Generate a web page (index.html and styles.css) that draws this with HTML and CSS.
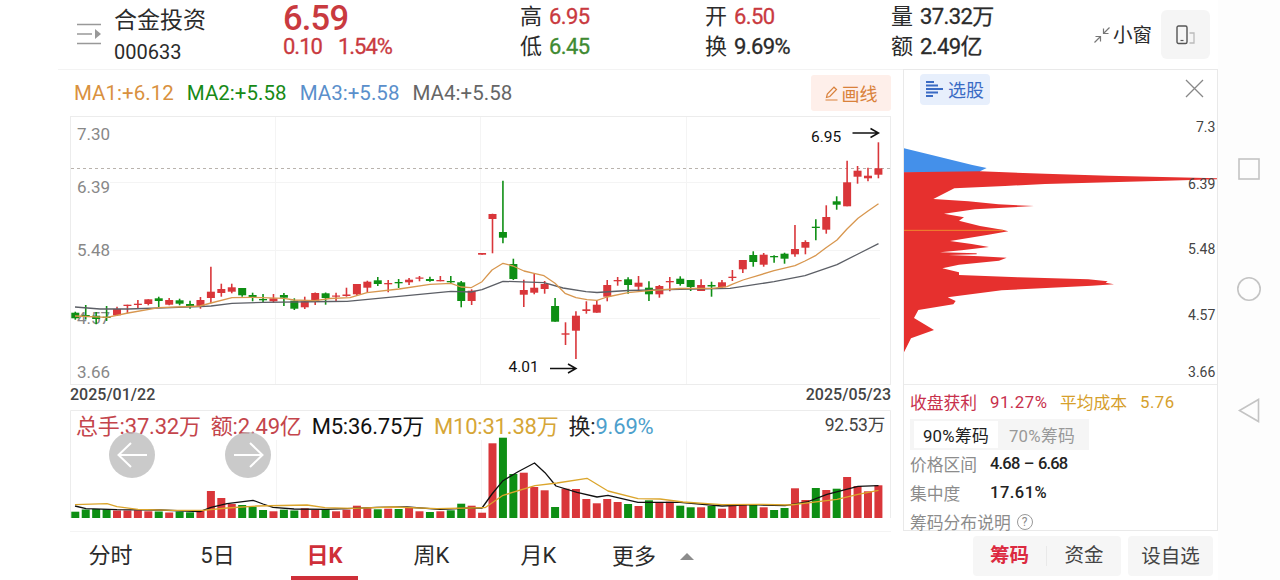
FILE: index.html
```
<!DOCTYPE html>
<html lang="zh-CN">
<head>
    <meta charset="UTF-8">
    <meta name="viewport" content="width=device-width, initial-scale=1.0">
    <title>合金投资 000633</title>
    <link rel="stylesheet" href="styles.css">
</head>
<body>
    <div class="app">
        <header class="quote-bar">
            <div class="stock">
                <svg class="menu-icon" width="26" height="22" viewBox="0 0 26 22">
                    <path d="M1 1.5h24M1 11h15M1 20.500h24" fill="none" stroke="#999" stroke-width="1.5"/>
                    <path d="M19 6l6 5-6 5z" fill="#999"/>
                </svg>
                <div>
                    <h1 class="stock-name">合金投资</h1>
                    <div class="stock-code">000633</div>
                </div>
            </div>
            <div class="price up">
                <div class="price-now">6.59</div>
                <div class="price-change"><span>0.10</span><span>1.54%</span></div>
            </div>
            <dl class="pair">
                <dt>高</dt><dd class="up">6.95</dd>
                <dt>低</dt><dd class="down">6.45</dd>
            </dl>
            <dl class="pair">
                <dt>开</dt><dd class="up">6.50</dd>
                <dt>换</dt><dd>9.69%</dd>
            </dl>
            <dl class="pair">
                <dt>量</dt><dd>37.32万</dd>
                <dt>额</dt><dd>2.49亿</dd>
            </dl>
            <div class="window-tools">
                <svg width="16" height="16" viewBox="0 0 16 16" fill="none" stroke="#777" stroke-width="1.2">
                    <path d="M15.500 .5L9.500 6.500M9.500 1.500v5h5M.5 15.500l6-6M1.500 9.500h5v5"/>
                </svg>
                <span>小窗</span>
                <button class="rotate-btn">
                    <svg width="20" height="20" viewBox="0 0 20 20" fill="none">
                        <rect x="1" y="1" width="10" height="17.500" rx="1.500" stroke="#555" stroke-width="1.400"/>
                        <path d="M4.500 15.500h3" stroke="#555" stroke-width="1.200"/>
                        <path d="M13.500 8h4.500v10h-4.500" stroke="#bbb" stroke-width="1.300"/>
                    </svg>
                </button>
            </div>
        </header>

        <main class="content">
            <section class="charts">
                <div class="ma-row">
                    <span class="ma1">MA1:+6.12</span>
                    <span class="ma2">MA2:+5.58</span>
                    <span class="ma3">MA3:+5.58</span>
                    <span class="ma4">MA4:+5.58</span>
                    <button class="draw-btn">
                        <svg width="13" height="15" viewBox="0 0 13 15" fill="none" stroke="#d9813b" stroke-width="1.200">
                            <path d="M.5 14h12M1.500 11.500l.8-3.500L9 1.200l2.500 2.300-6.700 7z"/>
                        </svg>
                        画线
                    </button>
                </div>
                <svg class="kline" width="821" height="269" viewBox="70 116 821 269">
                    <rect class="frame" x="70.500" y="116.500" width="820" height="268"/>
                    <path class="grid" d="M275.500 117v267M480.500 117v267M686.500 117v267M110 182.500h770M110 250.500h770M110 318.500h770"/>
                    <path class="last-price" d="M71 168.500h819"/>
                    <g class="axis">
                        <text x="77" y="139.500">7.30</text>
                        <text x="77" y="192.500">6.39</text>
                        <text x="77" y="256">5.48</text>
                        <text x="77" y="323.500">4.57</text>
                        <text x="77" y="378">3.66</text>
                    </g>
                    <g id="candles"></g>
                    <polyline class="line-slow" points="75,307 100,309 128,309 200,306.700 211,306 232,303.300 263,302.300 330,301.500 347,301.300 399,296.300 451,291.300 471,292 482,289.700 503,281.300 544,282.700 563,288 586,291.700 597,292.500 628,290.500 680,289.300 730,288.300 774,281.700 805,275.700 837,264.700 858,254 878.500,243.700"/>
                    <polyline class="line-fast" points="75,316 107,317.300 128,313 159,307.700 190,306.500 200,306 211,303 232,297.700 252,297.300 284,298.300 294,300 315,300.700 330,298.500 350,297.700 367,292.700 399,289 430,284.300 451,283.300 461,287 471,287.700 482,281.700 492,270 503,263.300 513,266 524,271 534,273.300 544,275.700 555,283.300 565,293.300 576,297.700 587,299.700 597,300.300 607,297 628,292.700 649,290.700 680,288.500 712,288.300 727,286.700 732,284.300 743,280 774,270.700 795,265.700 805,261 816,255.300 826,247.700 837,240 847,229 858,218.300 868,211 878.500,203.700"/>
                    <g class="mark">
                        <text x="811" y="142">6.95</text>
                        <path d="M852.500 133h26M870.500 128.500l8 4.500-8 4.500"/>
                        <text x="508.500" y="372">4.01</text>
                        <path d="M550 368.500h26M568 364l8 4.500-8 4.500"/>
                    </g>
                </svg>
                <div class="dates"><span>2025/01/22</span><span>2025/05/23</span></div>
                <div class="volume">
                    <svg width="821" height="122" viewBox="70 410 821 122">
                        <path class="frame" d="M70.500 518v-107.500h820V518"/>
                        <path class="grid" d="M276.500 440v78M481.500 440v78M686.500 440v78M58 531.500h840"/>
                        <g id="volumes"></g>
                        <polyline class="line-m5" points="75,506 86,508.700 117,509.700 160,510 200,511.700 211,507.300 227,503.700 253,500.300 263,504 273,507.300 294,509 325,509.300 347,508.700 377,507.300 407,507 440,509.300 470,508 482,508 492,494 503,480.700 518,471.700 534.500,463 545,472.700 556,486 577,492.300 597,497 608,495.300 638,502.300 680,502.300 722,506 753,504.700 785,505.700 807,502 827,494.300 858,486.300 878.500,485.700"/>
                        <polyline class="line-m10" points="75,504.700 107,503.700 117,506.700 138,509.300 173,510.300 203,510.300 227,508 257,506 307,505 325,507.700 353,508.300 393,507 437,508.700 470,508 485,507.700 503,495.300 535,485.700 557,483 587,478.300 608,491 638,498.700 660,499 683,502 722,504.700 760,504.300 790,505 837,499.300 858,494.300 878.500,490.300"/>
                    </svg>
                    <div class="vol-legend">
                        <span class="up">总手:37.32万</span>
                        <span class="up">额:2.49亿</span>
                        <span class="m5">M5:36.75万</span>
                        <span class="m10">M10:31.38万</span>
                        <span>换:<b>9.69%</b></span>
                        <span class="vol-max">92.53万</span>
                    </div>
                    <button class="pan pan-left">
                        <svg width="46" height="46" viewBox="0 0 46 46"><path d="M38 23H9.500M22 11L9.500 23 22 35"/></svg>
                    </button>
                    <button class="pan pan-right">
                        <svg width="46" height="46" viewBox="0 0 46 46"><path d="M9 23h28.500M25 11l12.500 12L25 35"/></svg>
                    </button>
                </div>
            </section>

            <aside class="chips">
                <div class="chips-head">
                    <button class="pick-btn">
                        <svg width="17" height="16" viewBox="0 0 17 16" stroke="#3a6bc4" stroke-width="2">
                            <path d="M0 1h8M0 4.500h12M0 8h17M0 11.500h12M0 15h7"/>
                        </svg>
                        选股
                    </button>
                    <svg class="close" width="19" height="19" viewBox="0 0 19 19" stroke="#888" stroke-width="1.300">
                        <path d="M1 1l17 17M18 1L1 18"/>
                    </svg>
                </div>
                <svg class="profile" width="313" height="274" viewBox="27 0 939 822">
                    <path fill="#4490ea" d="M27 115L110 135 232 165 275 174 255 184V188H27z"/>
                    <path fill="#e6302e" d="M27 187L255 184 450 191 640 197 967 205 967 208 810 212 450 222 330 228 178 235 115 267 220 274 310 283 417 288 240 298 147 311 207 322 192 332 255 348 322 359 340 364 280 374 165 393 230 402 282 411 200 421 135 427 245 430 245 433 160 435 255 439 335 443 312 452 192 464 142 475 192 487 192 495 370 502 580 508 638 514 632 518 657 523 590 527 320 541 158 562 182 573 175 583 70 600 57 624 117 660 48 685 27 727z"/>
                    <path stroke="#f08a2e" stroke-width="3" d="M27 361H325"/>
                    <g class="chip-axis">
                        <text x="961" y="65">7.3</text>
                        <text x="961" y="237">6.39</text>
                        <text x="961" y="433">5.48</text>
                        <text x="961" y="629">4.57</text>
                        <text x="961" y="801">3.66</text>
                    </g>
                </svg>
                <div class="chips-info">
                    <div class="info-row profit">
                        <span>收盘获利</span><span class="num">91.27%</span>
                        <span class="cost">平均成本</span><span class="cost num">5.76</span>
                    </div>
                    <div class="segment">
                        <button class="active">90%筹码</button>
                        <button>70%筹码</button>
                    </div>
                    <div class="info-row"><span>价格区间</span><strong class="range">4.68 – 6.68</strong></div>
                    <div class="info-row"><span>集中度</span><strong>17.61%</strong></div>
                    <div class="info-row help"><span>筹码分布说明</span><i>?</i></div>
                </div>
            </aside>
        </main>

        <footer class="bottom-bar">
            <nav class="tabs">
                <a>分时</a>
                <a>5日</a>
                <a class="active">日K</a>
                <a>周K</a>
                <a>月K</a>
                <a class="more">更多 <i></i></a>
            </nav>
            <div class="actions">
                <div class="switch">
                    <button class="active">筹码</button>
                    <button>资金</button>
                </div>
                <button class="add-btn">设自选</button>
            </div>
        </footer>
    </div>

    <div class="system-nav">
        <svg width="24" height="266" viewBox="0 0 24 266" fill="none" stroke="#c4c4c4" stroke-width="1.600">
            <rect x="2" y="2" width="20" height="20"/>
            <circle cx="12" cy="132" r="11.200"/>
            <path d="M21.500 242.500v22L2.500 253.500z"/>
        </svg>
    </div>

    <script src="chart.js"></script>
</body>
</html>
```
FILE: styles.css
```
* {
    margin: 0;
    padding: 0;
    box-sizing: border-box;
}
body {
    display: flex;
    width: 1280px;
    height: 580px;
    overflow: hidden;
    background: #fff;
    color: #2b2b2b;
    font-family: Roboto, "Noto Sans CJK SC", sans-serif;
}
button {
    border: none;
    background: none;
    color: inherit;
    font: inherit;
}
svg {
    display: block;
    flex-shrink: 0;
}
.up {
    color: #c93a3f;
}
.down {
    color: #3f8a32;
}
.app {
    display: flex;
    flex-direction: column;
    width: 1218px;
    padding-left: 58px;
}

/* header */
.quote-bar {
    display: grid;
    grid-template-columns: 225px 237px 185px 186px 203px 1fr;
    height: 70px;
    border-bottom: 1px solid #f3f3f3;
}
.stock {
    display: flex;
    padding: 6px 0 0 18px;
}
.menu-icon {
    margin: 17px 12px 0 0;
}
.stock-name {
    font-size: 23px;
    font-weight: 400;
    line-height: 30px;
}
.stock-code {
    font-size: 20px;
    line-height: 32px;
}
.price-now {
    font-size: 34.500px;
    font-weight: 500;
    line-height: 36px;
    letter-spacing: -.8px;
}
.price-change {
    display: flex;
    gap: 16px;
    font-size: 22px;
    line-height: 22px;
    letter-spacing: -1px;
    -webkit-text-stroke: .3px;
}
.pair {
    display: grid;
    grid-template-columns: 29px 1fr;
    align-content: start;
    font-size: 22px;
    line-height: 30px;
    padding-top: 2px;
}
.pair dd {
    letter-spacing: -.6px;
    -webkit-text-stroke: .3px;
    white-space: nowrap;
}
.window-tools {
    display: flex;
    align-items: center;
    font-size: 19.500px;
}
.window-tools span {
    margin: -2px 9px 0 3px;
}
.rotate-btn {
    display: flex;
    align-items: center;
    justify-content: center;
    width: 49px;
    height: 49px;
    border-radius: 6px;
    background: #f5f5f5;
}

/* charts */
.content {
    display: flex;
    height: 462px;
}
.charts {
    width: 845px;
    padding-left: 12px;
}
.ma-row {
    display: flex;
    align-items: center;
    gap: 13px;
    height: 46px;
    padding: 0 12px 0 4px;
    font-size: 20.500px;
    letter-spacing: .03px;
}
.ma1 { color: #d9913f; }
.ma2 { color: #178a17; }
.ma3 { color: #5a8fcb; }
.ma4 { color: #666; }
.draw-btn {
    display: flex;
    align-items: center;
    justify-content: center;
    gap: 4px;
    width: 80px;
    height: 36px;
    margin-left: auto;
    border-radius: 3px;
    background: #feefea;
    color: #d9813b;
    font-size: 18px;
    letter-spacing: 0;
}
.frame {
    fill: none;
    stroke: #ececec;
}
.grid {
    stroke: #f4f4f4;
}
.last-price {
    stroke: #b9b3ad;
    stroke-dasharray: 3 3;
}
.axis {
    fill: #888;
    font-size: 17px;
}
.line-slow,
.line-fast,
.line-m5,
.line-m10 {
    fill: none;
    stroke-width: 1.300;
    stroke-linejoin: round;
}
.line-slow { stroke: #5c5f66; }
.line-fast { stroke: #d8974f; }
.line-m5 { stroke: #111; }
.line-m10 { stroke: #dba52c; }
.mark {
    fill: #111;
    font-size: 15.500px;
}
.mark path {
    fill: none;
    stroke: #111;
    stroke-width: 1.500;
}
.rise {
    fill: #d9363a;
    stroke: #d9363a;
}
.fall {
    fill: #0e8f14;
    stroke: #0e8f14;
}
.wick {
    stroke-width: 1.600;
}
.body {
    stroke: none;
}
.dates {
    display: flex;
    justify-content: space-between;
    width: 821px;
    height: 25px;
    color: #444;
    font-size: 16px;
    font-weight: 500;
    line-height: 20px;
}
.volume {
    position: relative;
    width: 821px;
}
.vol-legend {
    position: absolute;
    top: 3px;
    left: 6px;
    right: 6px;
    display: flex;
    gap: 10px;
    color: #222;
    font-size: 22px;
    line-height: 28px;
    letter-spacing: -.2px;
    white-space: nowrap;
}
.vol-legend .up { color: #c4454c; }
.vol-legend .m5 { color: #111; }
.vol-legend .m10 { color: #d6a637; }
.vol-legend b {
    color: #4d9fcc;
    font-weight: 400;
}
.vol-legend .vol-max {
    margin-left: auto;
    color: #444;
    font-size: 17.500px;
    line-height: 24px;
}
.pan {
    position: absolute;
    top: 22px;
    border-radius: 50%;
    background: rgba(190, 190, 190, .82);
}
.pan-left { left: 39px; }
.pan-right { left: 155px; }
.pan path {
    fill: none;
    stroke: #fff;
    stroke-width: 2;
}

/* chip distribution */
.chips {
    width: 315px;
    height: 462px;
    margin-top: -1px;
    border: 1px solid #e9e9e9;
}
.chips-head {
    display: flex;
    align-items: flex-start;
    justify-content: space-between;
    height: 40px;
    padding: 4px 13px 0 16px;
}
.pick-btn {
    display: flex;
    align-items: center;
    gap: 5px;
    height: 31px;
    padding: 0 6px 1px;
    border-radius: 4px;
    background: #e7effc;
    color: #3a6bc4;
    font-size: 18px;
}
.close {
    margin-top: 5px;
}
.chip-axis {
    fill: #444;
    font-size: 42px;
    text-anchor: end;
}
.chips-info {
    height: 147px;
    padding: 3px 6px 0;
    border-top: 1px solid #ececec;
    color: #8c8c8c;
    font-size: 16.800px;
}
.info-row {
    display: flex;
    align-items: center;
    height: 29px;
    white-space: nowrap;
}
.info-row span {
    flex: none;
}
.info-row span:first-child {
    width: 80px;
}
.info-row strong {
    color: #222;
    font-size: 16.500px;
    font-weight: 500;
    letter-spacing: .5px;
}
.info-row .range {
    letter-spacing: -.8px;
    word-spacing: 1px;
}
.profit {
    height: 28px;
    color: #c8304c;
}
.profit .num {
    width: 70px;
    letter-spacing: .5px;
}
.profit .cost {
    width: 80px;
    color: #d6a02c;
}
.segment {
    display: flex;
    align-items: center;
    width: 179px;
    height: 31px;
    margin: 3px 0 -1px;
    padding: 0 7px 0 4px;
    background: #f5f5f5;
}
.segment button {
    flex: none;
    width: 84px;
    height: 27px;
    color: #999;
    font-size: 16.800px;
    letter-spacing: .3px;
    white-space: nowrap;
}
.segment button + button {
    width: 88px;
}
.segment .active {
    background: #fff;
    color: #222;
}
.help {
    gap: 6px;
}
.info-row.help span:first-child {
    width: auto;
}
.help i {
    width: 16px;
    height: 16px;
    border: 1px solid #999;
    border-radius: 50%;
    font-size: 12px;
    font-style: normal;
    line-height: 14px;
    text-align: center;
}

/* bottom bar */
.bottom-bar {
    display: flex;
    justify-content: space-between;
    height: 48px;
}
.tabs {
    display: flex;
    margin-left: -1px;
}
.tabs a {
    position: relative;
    width: 107px;
    font-size: 22px;
    line-height: 47px;
    text-align: center;
}
.tabs .active {
    color: #cf2f39;
    font-weight: 700;
}
.tabs .active::after {
    content: "";
    position: absolute;
    left: 20px;
    bottom: 0;
    width: 67px;
    height: 4px;
    background: #cf2f39;
}
.tabs .more {
    display: flex;
    align-items: center;
    gap: 24px;
    padding-left: 20px;
}
.more i {
    border: 7px solid transparent;
    border-top: none;
    border-bottom: 7px solid #8c8c8c;
}
.actions {
    display: flex;
    gap: 7px;
    padding: 4px 5px 4px 0;
    font-size: 19.500px;
}
.switch {
    display: flex;
    align-items: center;
    width: 148px;
    border-radius: 4px;
    background: #f6f6f6;
    color: #444;
}
.switch button {
    width: 76px;
    height: 20px;
    line-height: 20px;
}
.switch .active {
    border-right: 1px solid #e9e9e9;
    color: #dc2a40;
    font-weight: 700;
}
.add-btn {
    width: 85px;
    padding-bottom: 3px;
    border-radius: 4px;
    background: #f6f6f6;
    color: #444;
}

.system-nav {
    width: 62px;
    padding: 157px 0 0 19px;
    background: #fdfdfd;
}
```
FILE: chart.js
```
// color, high, body top, body bottom, low, volume height
const days = [
    ["g", 311.7, 312.7, 318.3, 319.7, 6.3], ["g", 305, 315, 316.5, 319.5, 8.5],
    ["g", 312, 315.7, 319, 324.3, 9], ["g", 306, 316.7, 318, 321, 8.7],
    ["r", 306.7, 309, 315.3, 316, 7.5], ["r", 304.7, 304.7, 306, 313.3, 7.5],
    ["r", 300, 303.7, 305, 308.7, 7.7], ["r", 299.3, 299.3, 304, 305.3, 6.7],
    ["g", 296.7, 298.3, 301, 307.3, 6.5], ["r", 298, 300, 304.7, 305.3, 5.5],
    ["g", 298.7, 300.3, 303.7, 305.3, 6.5], ["g", 300.7, 304, 306, 308.7, 5.7],
    ["r", 297, 300, 306.7, 308.7, 7], ["r", 266.7, 291.7, 298, 303.3, 27],
    ["r", 283.7, 289, 293, 296.7, 20], ["r", 283.7, 287.3, 291.7, 293.3, 14],
    ["g", 288, 288, 295.3, 296.7, 13], ["g", 292.7, 295, 297, 301.3, 11.3],
    ["g", 294, 299, 300.3, 302.7, 8], ["r", 294, 298.3, 301.3, 302.7, 6.7],
    ["g", 293, 295, 297.7, 306, 8.3], ["g", 298.3, 300.7, 308.7, 310, 7.5],
    ["r", 296.7, 301.3, 307.3, 309, 9.7], ["r", 292.5, 293, 300.7, 305, 8],
    ["g", 292.5, 293.3, 298, 304.7, 9], ["r", 292.7, 295.5, 296.7, 301.7, 6.7],
    ["r", 287.7, 294.5, 296, 296.7, 8.3], ["r", 284, 284, 294.3, 296, 12.3],
    ["r", 280.7, 281.7, 287.7, 292, 9.7], ["g", 277, 280.3, 284, 286, 8.7],
    ["r", 280, 283, 284.3, 292.3, 9.3], ["g", 279, 282, 283.3, 288, 9],
    ["r", 278, 279.7, 282.3, 285, 10.7], ["r", 276, 277.5, 278.7, 281.3, 6.7],
    ["g", 276.7, 279, 281, 281.7, 6], ["r", 276, 280, 281.3, 281.3, 6.7],
    ["g", 276, 281, 282.3, 283.3, 7.7], ["g", 281, 282.3, 301, 307.3, 14.3],
    ["r", 289.3, 290.7, 301, 305, 12.3], ["r", 253, 253, 254.7, 254.7, 5.3],
    ["r", 213.7, 214, 219, 253.3, 74.7], ["g", 180.7, 232, 237.7, 243.3, 80.3],
    ["g", 258.7, 264, 279, 280, 44], ["r", 279.7, 290, 294.7, 307, 45.3],
    ["r", 274, 287.7, 292.7, 294.3, 31], ["r", 281, 284, 289, 293.7, 27.7],
    ["g", 298, 306, 321.7, 321.7, 11], ["r", 322.3, 333.3, 334.7, 345, 29.3],
    ["r", 311.3, 315.7, 330.7, 359, 29], ["r", 301.3, 309.3, 311, 313.7, 19],
    ["r", 300.3, 304.7, 312.7, 312.7, 14.7], ["r", 280, 285, 296.7, 301.3, 19],
    ["r", 277, 280, 281.3, 285.7, 16], ["g", 277.3, 279.3, 285, 293.7, 14],
    ["r", 276, 282.7, 286.7, 290.3, 12], ["g", 281.3, 287.7, 294.3, 301, 17.7],
    ["r", 285, 286, 294.3, 297.7, 15.3], ["r", 277, 281, 282.3, 291.3, 16.3],
    ["g", 276.3, 278.7, 284, 285.7, 12.3], ["g", 280, 280, 287, 291, 10.7],
    ["r", 279.3, 285, 291, 291, 10.7], ["g", 281.7, 285, 286.5, 296.7, 12],
    ["r", 280, 282.3, 287.3, 289, 9.3], ["r", 270, 276.7, 278, 281, 12.7],
    ["r", 260, 260, 269.3, 273, 14], ["g", 251.3, 255, 262, 266.7, 13.7],
    ["r", 253, 254.7, 264.7, 266.7, 10.7], ["g", 255.3, 256, 257.3, 262.7, 8],
    ["g", 252.7, 253.7, 258.7, 263.7, 10], ["r", 225, 249, 254.3, 256.7, 29.7],
    ["r", 240.3, 242, 247.7, 254.3, 18], ["g", 219.3, 226.7, 228, 240.3, 30],
    ["r", 205.3, 217, 229.7, 233.7, 28], ["g", 196.3, 201.3, 204.7, 209.7, 29.3],
    ["r", 160.7, 182.3, 206.3, 206.3, 41], ["r", 166, 170.7, 176.7, 183.7, 32],
    ["r", 167.7, 175.7, 178.3, 181.3, 26.7], ["r", 142.3, 168.3, 174.7, 178.3, 32.7]
];

const step = 10.43;
let candles = "";
let volumes = "";

days.forEach(([color, high, top, bottom, low, vol], i) => {
    const x = 75.3 + i * step;
    const cls = color === "r" ? "rise" : "fall";
    candles += `<g class="${cls}">
        <line class="wick" x1="${x}" x2="${x}" y1="${high}" y2="${low}"/>
        <rect class="body" x="${x - 4}" y="${top}" width="8" height="${bottom - top}"/>
    </g>`;
    volumes += `<rect class="body ${cls}" x="${x - 4}" y="${518 - vol}" width="8" height="${vol}"/>`;
});

document.getElementById("candles").innerHTML = candles;
document.getElementById("volumes").innerHTML = volumes;
```
